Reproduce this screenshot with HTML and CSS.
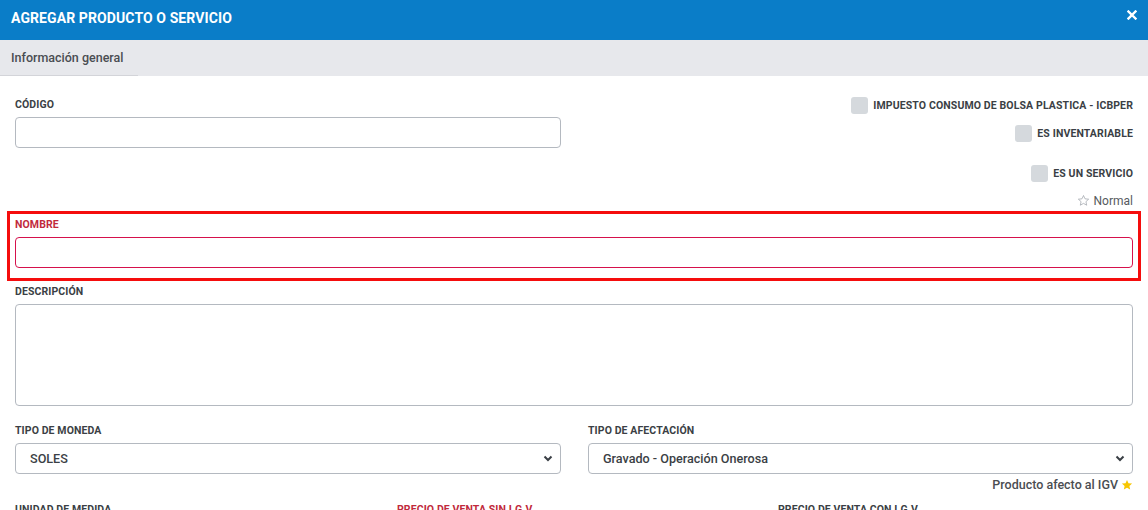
FILE: index.html
```html
<!DOCTYPE html>
<html lang="es">
<head>
<meta charset="utf-8">
<title>Agregar producto o servicio</title>
<link rel="stylesheet" href="styles.css">
</head>
<body>
<div class="modal">
  <header class="modal-header">
    <h1 class="modal-title">AGREGAR PRODUCTO O SERVICIO</h1>
    <button class="close" type="button" aria-label="Cerrar">
      <svg width="10" height="10" viewBox="0 0 10 10"><path d="M1.5 1.5 L8.5 8.5 M8.5 1.5 L1.5 8.5" stroke="#fff" stroke-width="2.4" stroke-linecap="square"/></svg>
    </button>
  </header>
  <nav class="tabs">
    <div class="tab active">Información general</div>
  </nav>
  <main class="modal-body">
    <div class="row-top">
      <div class="field">
        <label class="label">CÓDIGO</label>
        <input class="control" type="text">
      </div>
      <div class="checks">
        <div class="check check-1"><span class="box"></span><span class="check-text">IMPUESTO CONSUMO DE BOLSA PLASTICA - ICBPER</span></div>
        <div class="check check-2"><span class="box"></span><span class="check-text">ES INVENTARIABLE</span></div>
        <div class="check check-3"><span class="box"></span><span class="check-text">ES UN SERVICIO</span></div>
        <div class="normal">
          <svg width="13" height="13" viewBox="0 0 24 24"><path d="M12 2.8l2.8 6.1 6.7.7-5 4.5 1.4 6.6L12 17.3l-5.9 3.4 1.4-6.6-5-4.5 6.7-.7z" fill="none" stroke="#9aa0a6" stroke-width="1.3" stroke-linejoin="round"/></svg>
          <span>Normal</span>
        </div>
      </div>
    </div>

    <div class="field field-nombre">
      <label class="label label-req">NOMBRE</label>
      <input class="control control-req" type="text">
    </div>

    <div class="field field-desc">
      <label class="label">DESCRIPCIÓN</label>
      <textarea class="control textarea"></textarea>
    </div>

    <div class="row-two">
      <div class="field">
        <label class="label">TIPO DE MONEDA</label>
        <div class="select">
          <span class="select-value">SOLES</span>
          <svg class="chev" width="10" height="7" viewBox="0 0 10 7"><path d="M1.5 1.5 L5 5 L8.5 1.5" fill="none" stroke="#3a3f45" stroke-width="2"/></svg>
        </div>
      </div>
      <div class="field">
        <label class="label">TIPO DE AFECTACIÓN</label>
        <div class="select">
          <span class="select-value">Gravado - Operación Onerosa</span>
          <svg class="chev" width="10" height="7" viewBox="0 0 10 7"><path d="M1.5 1.5 L5 5 L8.5 1.5" fill="none" stroke="#3a3f45" stroke-width="2"/></svg>
        </div>
        <div class="hint">Producto afecto al IGV
          <svg width="12" height="12" viewBox="0 0 24 24"><path d="M12 1.8l3 6.6 7.2.8-5.4 4.9 1.5 7.1L12 17.6l-6.3 3.6 1.5-7.1-5.4-4.9 7.2-.8z" fill="#f7c600"/></svg>
        </div>
      </div>
    </div>

    <div class="row-three">
      <label class="label">UNIDAD DE MEDIDA</label>
      <label class="label label-req">PRECIO DE VENTA SIN I.G.V.</label>
      <label class="label">PRECIO DE VENTA CON I.G.V.</label>
    </div>
  </main>
</div>
</body>
</html>
```

FILE: styles.css
```css
* { box-sizing: border-box; }
html, body { margin: 0; padding: 0; }
body {
  width: 1148px;
  height: 510px;
  overflow: hidden;
  font-family: Roboto, "Liberation Sans", Arial, sans-serif;
  background: #fff;
  color: #3b3f45;
}
.modal { width: 1148px; }
.modal-header {
  height: 40px;
  background: #0a7dc8;
  display: flex;
  align-items: center;
  justify-content: space-between;
  padding: 0 11px 0 11px;
}
.modal-title {
  margin: 0;
  font-size: 14px;
  font-weight: 700;
  color: #fff;
  letter-spacing: 0.1px;
  position: relative;
  top: -2px;
}
.close {
  border: 0;
  background: transparent;
  padding: 0;
  width: 10px;
  height: 10px;
  display: flex;
  position: relative;
  top: -5px;
}
.tabs {
  height: 36px;
  background: #e7e8ec;
  display: flex;
  align-items: stretch;
}
.tab {
  width: 138px;
  padding: 0 11px;
  font-size: 12.5px;
  font-weight: 500;
  color: #4a4d52;
  display: flex;
  align-items: center;
  border-bottom: 1px solid #d3d4d9;
  padding-bottom: 1px;
}
.modal-body {
  padding: 20px 15px 0 15px;
}
.row-top {
  display: grid;
  grid-template-columns: 546px 545px;
  column-gap: 27px;
}
.field { display: flex; flex-direction: column; }
.label {
  display: block;
  font-size: 10.5px;
  font-weight: 700;
  line-height: 12px;
  color: #3b3f45;
  letter-spacing: 0.1px;
}
.row-top .field .label { margin-top: 3px; }
.control {
  display: block;
  width: 100%;
  height: 31px;
  margin-top: 6px;
  border: 1px solid #b4b9c0;
  border-radius: 4px;
  background: #fff;
  font-family: inherit;
  font-size: 13px;
  padding: 0 12px;
}
.checks {
  display: flex;
  flex-direction: column;
  align-items: flex-end;
  padding-top: 1px;
}
.check {
  display: flex;
  align-items: center;
  height: 17px;
}
.check-2 { margin-top: 11px; }
.check-3 { margin-top: 23px; }
.box {
  width: 17px;
  height: 17px;
  border-radius: 3px;
  background: #d5d9dd;
  margin-right: 5px;
}
.check-text {
  font-size: 10.5px;
  font-weight: 700;
  color: #3b3f45;
  letter-spacing: 0.12px;
}
.normal {
  margin-top: 12px;
  display: flex;
  align-items: center;
  gap: 4px;
  font-size: 12px;
  line-height: 12px;
  color: #555a60;
}
.field-nombre {
  margin-top: 12px;
  padding-bottom: 5px;
  outline: 3px solid #f50d0d;
  outline-offset: 5px;
}
.label-req { color: #c12a3c; }
.control-req { border-color: #d6114c; }
.field-desc { margin-top: 13px; }
.textarea {
  height: 102px;
  margin-top: 6px;
  resize: none;
  padding: 8px 12px;
}
.row-two {
  margin-top: 19px;
  display: grid;
  grid-template-columns: 546px 545px;
  column-gap: 27px;
}
.select {
  height: 31px;
  margin-top: 6px;
  border: 1px solid #b4b9c0;
  border-radius: 4px;
  display: flex;
  align-items: center;
  justify-content: space-between;
  padding: 0 7px 0 14px;
}
.select-value {
  font-size: 12.6px;
  font-weight: 500;
  color: #3b3f45;
}
.hint {
  margin-top: 5px;
  align-self: flex-end;
  display: flex;
  align-items: center;
  gap: 3px;
  font-size: 12.5px;
  font-weight: 500;
  line-height: 12px;
  color: #4a4d52;
}
.row-three {
  margin-top: 13px;
  display: grid;
  grid-template-columns: 355px 354px 355px;
  column-gap: 27px;
}
```
